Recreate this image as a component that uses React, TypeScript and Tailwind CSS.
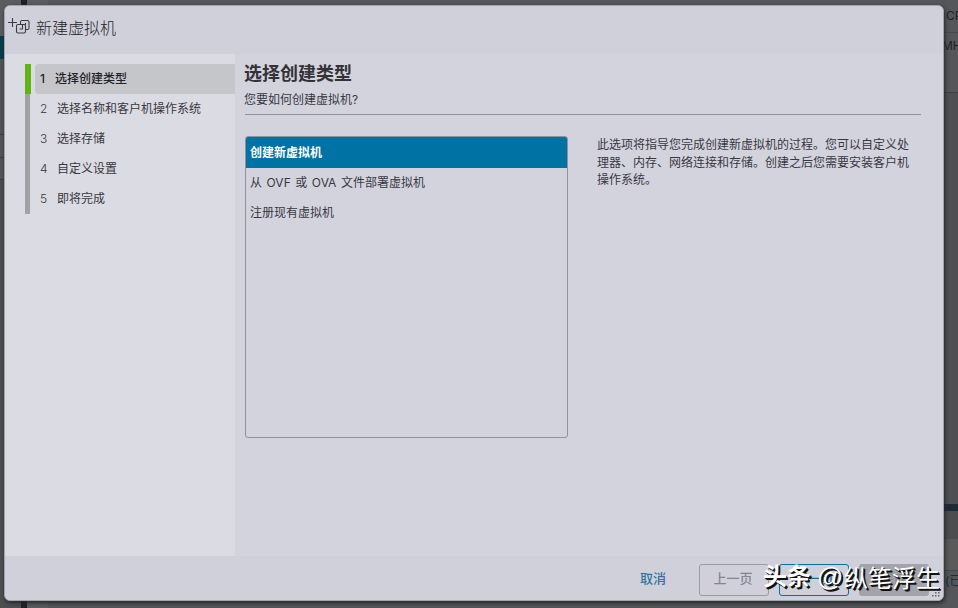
import React, { useState } from 'react';

interface Step {
  id: number;
  label: string;
}

const steps: Step[] = [
  { id: 1, label: '选择创建类型' },
  { id: 2, label: '选择名称和客户机操作系统' },
  { id: 3, label: '选择存储' },
  { id: 4, label: '自定义设置' },
  { id: 5, label: '即将完成' },
];

const creationTypes: string[] = [
  '创建新虚拟机',
  '从 OVF 或 OVA 文件部署虚拟机',
  '注册现有虚拟机',
];

const NewVmIcon: React.FC = () => (
  <svg width="22" height="18" viewBox="0 0 22 18" fill="none" stroke="#3a3a44" strokeWidth="1.1">
    <path d="M4.5 1v9M0 5.5h9" />
    <path d="M12.500 7.500V5q0-1.500 1.500-1.500h5.500q1.500 0 1.500 1.500v6q0 1.500-1.500 1.500h-2" />
    <rect x="8.500" y="7.500" width="9" height="8.500" rx="1.500" />
    <path d="M14.500 7.500v4.500h-3M17.500 6v2" />
  </svg>
);

// Dimmed host page behind the dialog
const Backdrop: React.FC = () => (
  <div className="flex h-full justify-between bg-[#555659]">
    <div className="flex">
      <div className="flex w-[21px] flex-col">
        <div className="h-9 bg-[#5b5c5e]" />
        <div className="h-[23px] bg-[#073d49]" />
        <div className="h-[76px] border-b border-[#3e3f41] bg-[#525355]" />
        <div className="h-[23px] border-b border-[#3e3f41]" />
        <div className="h-[22px] border-b border-[#3e3f41]" />
        <div className="flex-1 bg-[#4d4e50]" />
      </div>
      <div className="w-[6px] bg-[#1f2027]" />
      <div className="w-[21px] bg-[#5b5c5f]" />
    </div>
    <div className="flex w-[18px] flex-col overflow-hidden whitespace-nowrap text-xs text-[#202226]">
      <div className="h-[33px] border-b border-[#47484b] pt-2 pl-[6px]">CPU</div>
      <div className="h-[60px] border-b border-[#3e3f42] pt-[5px] pl-[2px]">MHz</div>
      <div className="h-[411px] bg-[#4e4f52]" />
      <div className="h-[7px] bg-[#1c2b38]" />
      <div className="h-7 bg-[#4c4d4f]" />
      <div className="h-8 border-b border-[#454648] bg-[#5a5a5b]" />
      <div className="flex-1 pt-[2px] pl-[5px] text-[#172f42]">(已</div>
    </div>
  </div>
);

const Watermark: React.FC = () => (
  <div className="absolute top-[559px] left-[763px] flex h-9 items-center whitespace-nowrap text-2xl leading-9 text-white [text-shadow:1px_1px_0_#111,2px_2px_0_#111]">
    <span className="font-bold">头条</span>
    <span className="ml-[6px] w-[27px] font-['Liberation_Sans'] text-[26px]">@</span>
    <span className="-mt-px font-['Noto_Sans_CJK_SC'] font-normal">纵笔浮生</span>
  </div>
);

const ResizeGrip: React.FC = () => (
  <svg className="absolute right-[3px] bottom-[3px]" width="8" height="8" fill="#66666e">
    <path d="M6 0h1.500v1.500h-1.500zM3 3h1.500v1.500h-1.500zM6 3h1.500v1.500h-1.500zM0 6h1.500v1.500h-1.500zM3 6h1.500v1.500h-1.500zM6 6h1.500v1.500h-1.500z" />
  </svg>
);

export default function App() {
  const [step, setStep] = useState<number>(1);
  const [selected, setSelected] = useState<number>(0);

  return (
    <div className="relative h-[608px] w-[958px] overflow-hidden font-[Inter,'Noto_Sans_CJK_SC',sans-serif] text-xs text-[#38383e]">
      <Backdrop />

      <div className="absolute top-[5px] left-[4px] flex h-[596px] w-[940px] flex-col overflow-hidden rounded-md border border-[#a3a3a9] bg-[#d3d3de] shadow-[1px_2px_4px_#242529]">
        <header className="flex h-12 shrink-0 items-center bg-[#d0d0da] pl-[3px]">
          <div className="mb-2">
            <NewVmIcon />
          </div>
          <h1 className="mb-[5px] ml-[6px] text-base font-light text-[#24242b]">新建虚拟机</h1>
        </header>

        <div className="flex min-h-0 flex-1">
          <nav className="w-[230px] bg-[#dbdbe3] pt-[10px] pl-5">
            {steps.map((s) => (
              <button
                key={s.id}
                onClick={() => setStep(s.id)}
                className="flex h-[30px] w-full"
              >
                <span className={s.id === step ? 'h-full w-[6px] bg-[#60b515]' : 'h-full w-[5px] bg-[#a1a1a6]'} />
                <span
                  className={
                    s.id === step
                      ? 'ml-1 flex h-full flex-1 items-center rounded-l-sm bg-[#c5c6ca] pl-[5px] font-medium text-[#222226]'
                      : 'ml-[5px] flex h-full flex-1 items-center pl-[5px]'
                  }
                >
                  <span className={s.id === step ? 'w-[15px] text-left' : 'w-[17px] text-left font-light'}>{s.id}</span>
                  {s.label}
                </span>
              </button>
            ))}
          </nav>

          <main className="flex-1 pt-2 pr-[22px] pl-[10px]">
            <h2 className="-ml-px h-[23px] text-lg leading-[23px] font-bold text-[#323237]">选择创建类型</h2>
            <p className="mt-[7px] h-[23px] border-b border-[#92929d] leading-4">
              <span className="-ml-px">您要如何创建虚拟机?</span>
            </p>
            <div className="mt-[21px] flex">
              <ul className="h-[302px] w-[323px] overflow-hidden rounded-[3px] border border-[#92929d]">
                {creationTypes.map((type, index) => (
                  <li
                    key={type}
                    onClick={() => setSelected(index)}
                    className={
                      index === selected
                        ? 'h-[31px] bg-[#0072a3] pl-[4px] leading-[31px] font-bold text-white'
                        : 'h-[30px] pl-[4px] leading-[30px] [word-spacing:1.2px]'
                    }
                  >
                    {type}
                  </li>
                ))}
              </ul>
              <p className="ml-[29px] w-[315px] leading-[17.5px] break-all">
                此选项将指导您完成创建新虚拟机的过程。您可以自定义处理器、内存、网络连接和存储。创建之后您需要安装客户机操作系统。
              </p>
            </div>
          </main>
        </div>

        <footer className="flex h-11 shrink-0 items-center justify-end gap-[10px] bg-[#d0d0da] pt-[3px] pr-[14px] font-medium">
          <button className="mr-[23px] w-[26px] pb-[2px] text-[13px] whitespace-nowrap text-[#2e75a0]">取消</button>
          <button disabled className="h-8 w-[70px] rounded-[3px] border border-[#9b9ba4] pr-[2px] pb-[2px] text-[13px] text-[#85858d]">
            上一页
          </button>
          <button className="h-8 w-[70px] rounded-[3px] border border-[#0072a3] pb-[2px] text-[13px] text-[#0072a3]">
            下一页
          </button>
          <button disabled className="h-8 w-[70px] rounded-[3px] bg-[#a3a3aa] pb-[2px] text-[13px] text-[#8a8a91]">
            完成
          </button>
        </footer>
        <ResizeGrip />
      </div>

      <Watermark />
    </div>
  );
}
